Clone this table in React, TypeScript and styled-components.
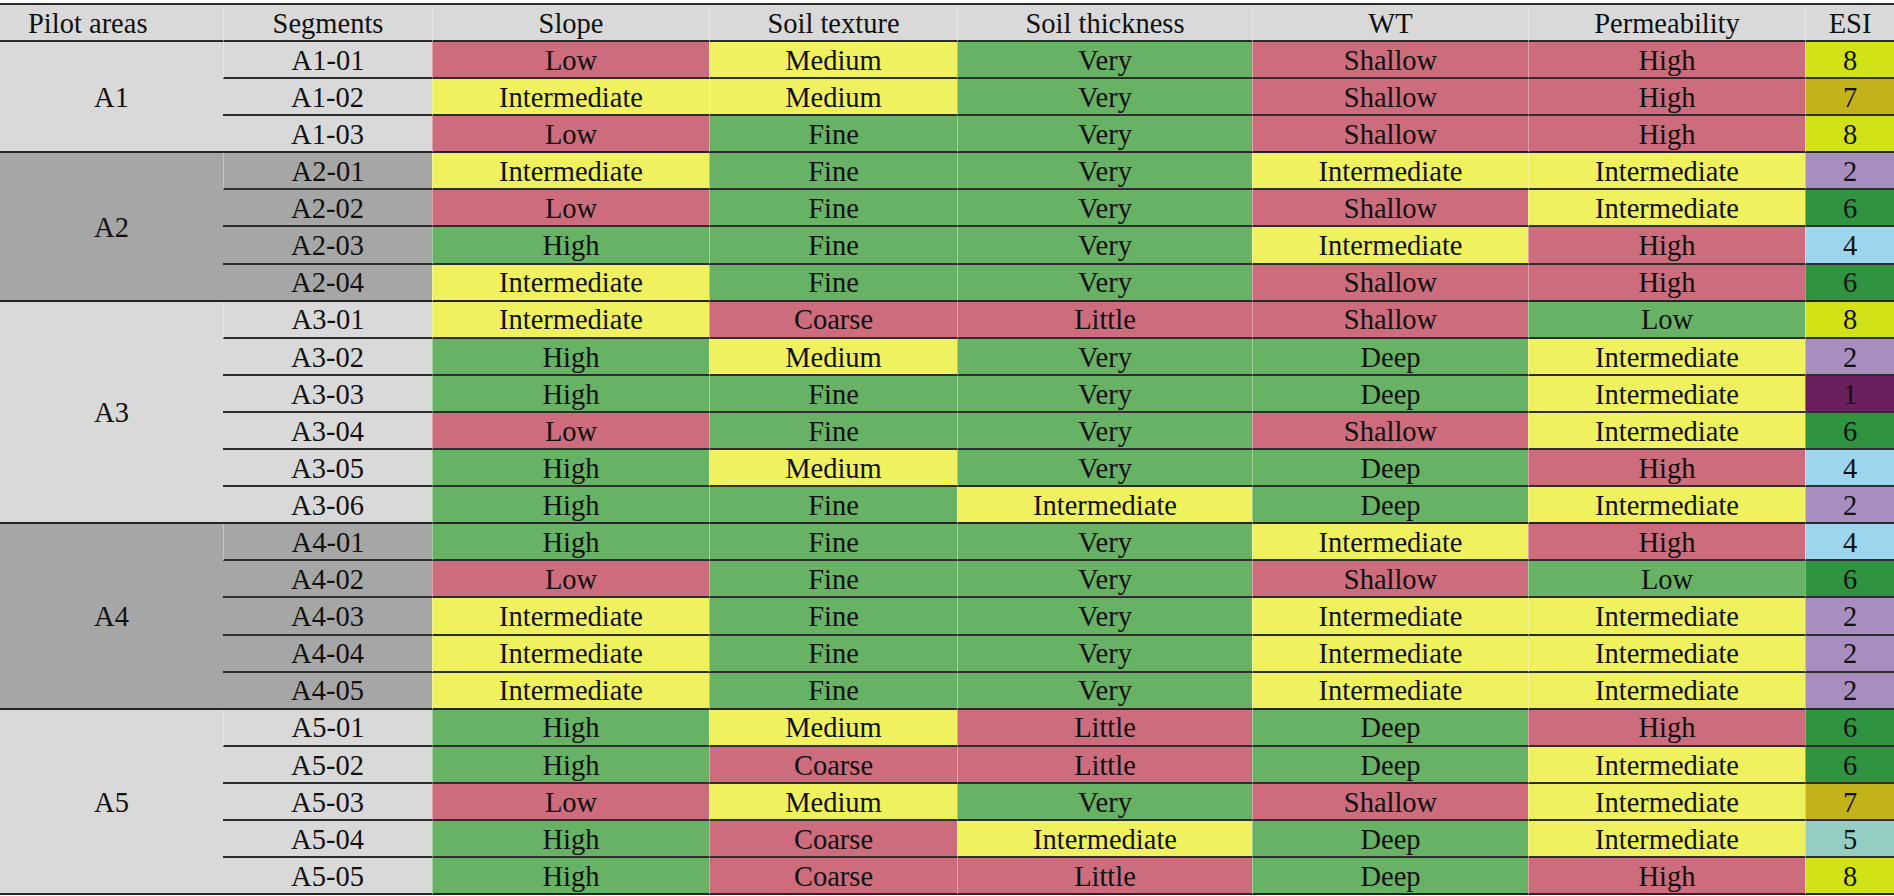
import React from "react";
import styled, { createGlobalStyle } from "styled-components";

const SERIF = `"Liberation Serif", "DejaVu Serif", serif`;

const Global = createGlobalStyle`
  html, body { margin: 0; padding: 0; background: #ffffff; }
  body { font-family: ${SERIF}; }
`;

const RED = "#cc6c7c";
const YEL = "#eff25e";
const GRN = "#67b265";

const ESI_COLORS: Record<number, string> = {
  1: "#6a1f5f",
  2: "#a88ec0",
  4: "#9dd4ee",
  5: "#94cec3",
  6: "#2f9340",
  7: "#c4b21a",
  8: "#d1e317",
};

const slopeC: Record<string, string> = { Low: RED, Intermediate: YEL, High: GRN };
const textureC: Record<string, string> = { Medium: YEL, Fine: GRN, Coarse: RED };
const thickC: Record<string, string> = { Very: GRN, Little: RED, Intermediate: YEL };
const wtC: Record<string, string> = { Shallow: RED, Intermediate: YEL, Deep: GRN };
const permC: Record<string, string> = { High: RED, Intermediate: YEL, Low: GRN };

type Row = [string, string, string, string, string, string, number];

const groups: { area: string; dark: boolean; rows: Row[] }[] = [
  {
    area: "A1",
    dark: false,
    rows: [
      ["A1-01", "Low", "Medium", "Very", "Shallow", "High", 8],
      ["A1-02", "Intermediate", "Medium", "Very", "Shallow", "High", 7],
      ["A1-03", "Low", "Fine", "Very", "Shallow", "High", 8],
    ],
  },
  {
    area: "A2",
    dark: true,
    rows: [
      ["A2-01", "Intermediate", "Fine", "Very", "Intermediate", "Intermediate", 2],
      ["A2-02", "Low", "Fine", "Very", "Shallow", "Intermediate", 6],
      ["A2-03", "High", "Fine", "Very", "Intermediate", "High", 4],
      ["A2-04", "Intermediate", "Fine", "Very", "Shallow", "High", 6],
    ],
  },
  {
    area: "A3",
    dark: false,
    rows: [
      ["A3-01", "Intermediate", "Coarse", "Little", "Shallow", "Low", 8],
      ["A3-02", "High", "Medium", "Very", "Deep", "Intermediate", 2],
      ["A3-03", "High", "Fine", "Very", "Deep", "Intermediate", 1],
      ["A3-04", "Low", "Fine", "Very", "Shallow", "Intermediate", 6],
      ["A3-05", "High", "Medium", "Very", "Deep", "High", 4],
      ["A3-06", "High", "Fine", "Intermediate", "Deep", "Intermediate", 2],
    ],
  },
  {
    area: "A4",
    dark: true,
    rows: [
      ["A4-01", "High", "Fine", "Very", "Intermediate", "High", 4],
      ["A4-02", "Low", "Fine", "Very", "Shallow", "Low", 6],
      ["A4-03", "Intermediate", "Fine", "Very", "Intermediate", "Intermediate", 2],
      ["A4-04", "Intermediate", "Fine", "Very", "Intermediate", "Intermediate", 2],
      ["A4-05", "Intermediate", "Fine", "Very", "Intermediate", "Intermediate", 2],
    ],
  },
  {
    area: "A5",
    dark: false,
    rows: [
      ["A5-01", "High", "Medium", "Little", "Deep", "High", 6],
      ["A5-02", "High", "Coarse", "Little", "Deep", "Intermediate", 6],
      ["A5-03", "Low", "Medium", "Very", "Shallow", "Intermediate", 7],
      ["A5-04", "High", "Coarse", "Intermediate", "Deep", "Intermediate", 5],
      ["A5-05", "High", "Coarse", "Little", "Deep", "High", 8],
    ],
  },
];

const widths = [223, 209, 277, 248, 295, 276, 277, 89];

const Page = styled.div`
  padding-top: 3px;
  width: 1894px;
  font-family: ${SERIF};
`;

const Table = styled.table`
  width: 1894px;
  table-layout: fixed;
  border-collapse: separate;
  border-spacing: 0;
  border-top: 2px solid #2b2b2b;
  font-family: ${SERIF};
  font-size: 28.5px;
  line-height: 1;
  color: #111111;
`;

const BaseCell = styled.td`
  box-sizing: border-box;
  padding: 3px 0 0 0;
  text-align: center;
  vertical-align: middle;
  white-space: nowrap;
  font-family: ${SERIF};
  border-left: 1px solid rgba(255, 255, 255, 0.35);
  &:first-child { border-left: none; }
`;

const HeadCell = styled(BaseCell).attrs({ as: "th" })<{ $left?: boolean }>`
  height: 37px;
  font-weight: normal;
  background: #d9d9d9;
  border-bottom: 2px solid #2b2b2b;
  text-align: ${(p) => (p.$left ? "left" : "center")};
  padding-left: ${(p) => (p.$left ? "28px" : "0")};
`;

const AreaCell = styled(BaseCell)<{ $dark: boolean }>`
  background: ${(p) => (p.$dark ? "#a6a6a6" : "#d9d9d9")};
  border-bottom: 2px solid #262626;
  border-left: none;
`;

const RowCell = styled(BaseCell)<{ $bg: string; $end: boolean }>`
  height: 37.1px;
  background: ${(p) => p.$bg};
  border-bottom: 2px solid ${(p) => (p.$end ? "#262626" : "#2e2e2e")};
`;

export default function App() {
  return (
    <Page>
      <Global />
      <Table>
        <colgroup>
          {widths.map((w, i) => (
            <col key={i} style={{ width: w }} />
          ))}
        </colgroup>
        <thead>
          <tr>
            <HeadCell $left>Pilot areas</HeadCell>
            <HeadCell>Segments</HeadCell>
            <HeadCell>Slope</HeadCell>
            <HeadCell>Soil texture</HeadCell>
            <HeadCell>Soil thickness</HeadCell>
            <HeadCell>WT</HeadCell>
            <HeadCell>Permeability</HeadCell>
            <HeadCell>ESI</HeadCell>
          </tr>
        </thead>
        <tbody>
          {groups.map((g) =>
            g.rows.map((r, i) => {
              const end = i === g.rows.length - 1;
              const seg = g.dark ? "#a6a6a6" : "#d9d9d9";
              return (
                <tr key={r[0]}>
                  {i === 0 && (
                    <AreaCell $dark={g.dark} rowSpan={g.rows.length}>
                      {g.area}
                    </AreaCell>
                  )}
                  <RowCell $bg={seg} $end={end}>{r[0]}</RowCell>
                  <RowCell $bg={slopeC[r[1]]} $end={end}>{r[1]}</RowCell>
                  <RowCell $bg={textureC[r[2]]} $end={end}>{r[2]}</RowCell>
                  <RowCell $bg={thickC[r[3]]} $end={end}>{r[3]}</RowCell>
                  <RowCell $bg={wtC[r[4]]} $end={end}>{r[4]}</RowCell>
                  <RowCell $bg={permC[r[5]]} $end={end}>{r[5]}</RowCell>
                  <RowCell $bg={ESI_COLORS[r[6]]} $end={end}>{r[6]}</RowCell>
                </tr>
              );
            })
          )}
        </tbody>
      </Table>
    </Page>
  );
}
